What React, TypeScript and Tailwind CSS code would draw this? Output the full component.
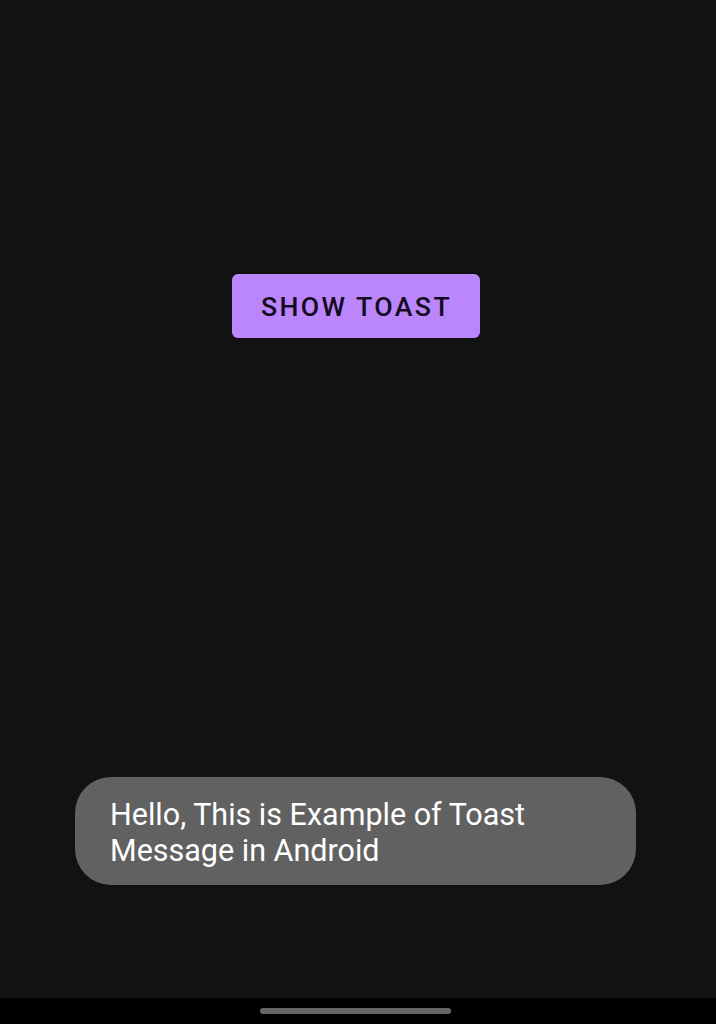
export default function App() {
  return (
    <div className="flex h-[1024px] w-[716px] flex-col overflow-hidden bg-black" style={{ fontFamily: "Roboto, 'Noto Sans', sans-serif" }}>
      <div className="flex flex-1 flex-col items-center bg-[#121212] pr-[5px] pt-[274px]">
        <button className="flex h-[64px] w-[248px] items-center justify-center rounded-[6px] bg-[#bb86fc] pl-[2px] pt-[3px] text-[26.7px] font-medium uppercase tracking-[0.09em] text-[#140b1e]">
          Show Toast
        </button>
        <div className="mt-[439px] flex h-[108px] w-[561px] items-center rounded-[36px] bg-[#616161] pl-[35px] pr-[20px] pt-[4px]">
          <p className="text-[30.5px] leading-[36px] text-white">
            Hello, This is Example of Toast
            <br />
            Message in Android
          </p>
        </div>
      </div>
      <div className="flex h-[26px] items-start justify-center pr-[6px] pt-[10px]">
        <div className="h-[6px] w-[191px] rounded-full bg-[#666666]" />
      </div>
    </div>
  );
}
